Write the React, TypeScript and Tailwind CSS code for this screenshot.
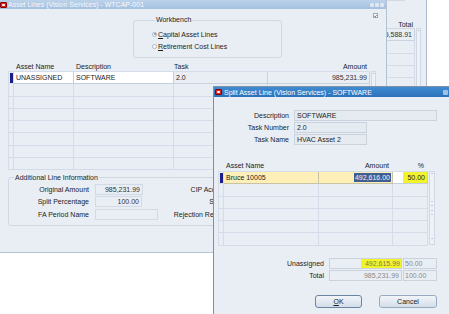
import React from 'react';

function TitleIcon() {
  return (
    <span className="flex h-[6px] w-[7px] items-center justify-center rounded-[1px] border border-[#8a0000] bg-[#d92424]">
      <span className="h-[2px] w-[3px] rounded-[1px] bg-white" />
    </span>
  );
}

function EmptyRow({ cols }: { cols: string[] }) {
  return (
    <div className="flex h-[12.25px]">
      {cols.map((c, i) => (
        <div key={i} className={`h-full border-r border-b border-[#d3dce8] ${c}`} />
      ))}
    </div>
  );
}

function ScrollTrack({ h }: { h: string }) {
  return (
    <div className={`ml-[1px] flex w-[5px] flex-col items-center border border-[#cfd8e4] bg-[#eef2f7] ${h}`}>
      <span className="mt-[1px] text-[5px] leading-[5px] text-[#8090a4]">ˆ</span>
    </div>
  );
}

export default function App() {
  const mainCols = ['w-[5px]', 'w-[60px]', 'w-[100px]', 'w-[94px]', 'w-[102px]'];
  const dlgCols = ['w-[5px]', 'w-[95px]', 'w-[74px]', 'w-[35px]'];

  return (
    <div className="relative h-[314px] w-[449px] overflow-hidden bg-white font-['Liberation_Sans',Arial,sans-serif] text-[7px] leading-none text-[#1c1c1c]">
      {/* window behind, only its Total column shows */}
      <div className="absolute left-[380px] top-0 flex h-[90px] w-[47px] flex-col border-r border-[#aebbcb] bg-[#e9eef5]">
        <div className="ml-[7px] h-[6px] w-[18px] border-b border-[#d0d9e4]" />
        <div className="mt-[20px] flex h-[8px]">
          <div className="w-[35px] pr-[2px] text-right">Total</div>
        </div>
        <div className="flex">
          <div className="flex w-[35px] flex-col border-t border-[#cfd8e4]">
            <div className="flex h-[12.25px] items-center justify-end border-b border-r border-[#c9d3df] pr-[2px] text-[#333]">5,588.91</div>
            <div className="h-[12.25px] border-b border-r border-[#d3dce8]" />
            <div className="h-[12.25px] border-b border-r border-[#d3dce8]" />
            <div className="h-[12.25px] border-b border-r border-[#d3dce8]" />
            <div className="h-[12.25px] border-b border-r border-[#d3dce8]" />
          </div>
          <ScrollTrack h="h-[62px]" />
        </div>
      </div>

      {/* Asset Lines window */}
      <div className="absolute left-0 top-0 flex h-[253px] w-[387px] flex-col border-r border-b border-[#b3c1d1] bg-[#e9eef5]">
        <div className="flex h-[9px] items-center bg-gradient-to-b from-[#bcd2ea] to-[#a4c0e0] text-[#f6f9fc]">
          <TitleIcon />
          <span className="ml-[1px]">Asset Lines (Vision Services) - WTCAP-001</span>
          <div className="ml-auto mr-[2px] flex gap-[1px]">
            <span className="h-[4px] w-[4px] rounded-[1px] bg-[#dce7f3]" />
            <span className="h-[4px] w-[4px] rounded-[1px] bg-[#dce7f3]" />
            <span className="h-[4px] w-[4px] rounded-[1px] bg-[#dce7f3]" />
          </div>
        </div>

        <div className="flex h-[54px] items-start">
          <fieldset className="ml-[133px] mt-[7px] h-[42px] w-[149px] rounded-[3px] border border-[#cfd8e3] pl-[18px]">
            <legend className="ml-[3px] px-[1px] leading-[8px]">Workbench</legend>
            <div className="mt-[4px] flex h-[12px] items-center gap-[1px]">
              <span className="flex h-[5px] w-[5px] items-center justify-center rounded-full border border-[#a8b4c2] bg-white">
                <span className="h-[2px] w-[2px] rounded-full bg-[#7d8896]" />
              </span>
              <span><span className="underline">C</span>apital Asset Lines</span>
            </div>
            <div className="flex h-[12px] items-center gap-[1px]">
              <span className="h-[5px] w-[5px] rounded-full border border-[#a8b4c2] bg-white" />
              <span><span className="underline">R</span>etirement Cost Lines</span>
            </div>
          </fieldset>
          <div className="ml-auto mr-[8px] mt-[4px] flex h-[5px] w-[5px] items-center justify-center border border-[#9aa7b6] bg-white">
            <svg width="4" height="4" viewBox="0 0 4 4">
              <path d="M0.5 2 L1.6 3.2 L3.6 0.6" stroke="#333" strokeWidth="0.8" fill="none" />
            </svg>
          </div>
        </div>

        <div className="ml-[8px] flex h-[8px] items-start">
          <div className="w-[5px]" />
          <div className="w-[60px] pl-[3px]">Asset Name</div>
          <div className="w-[100px] pl-[3px]">Description</div>
          <div className="w-[94px] pl-[1px]">Task</div>
          <div className="w-[102px] pr-[2px] text-right">Amount</div>
        </div>

        <div className="ml-[8px] flex">
          <div className="flex flex-col border-l border-t border-[#d3dce8]">
            <div className="flex h-[12.25px]">
              <div className="flex h-full w-[5px] items-center border-r border-b border-[#d3dce8] pl-[1px]">
                <span className="h-[10px] w-[3px] bg-[#1b1f8a]" />
              </div>
              <div className="flex h-full w-[60px] items-center border-r border-b border-[#c3cedb] bg-white pl-[2px]">UNASSIGNED</div>
              <div className="flex h-full w-[100px] items-center border-r border-b border-[#c3cedb] bg-white pl-[2px]">SOFTWARE</div>
              <div className="flex h-full w-[94px] items-center border-r border-b border-[#c9d3df] pl-[2px]">2.0</div>
              <div className="flex h-full w-[102px] items-center justify-end border-r border-b border-[#c9d3df] pr-[2px] text-[#333]">985,231.99</div>
            </div>
            {[0, 1, 2, 3, 4, 5, 6].map((i) => (
              <EmptyRow key={i} cols={mainCols} />
            ))}
          </div>
          <ScrollTrack h="h-[98px]" />
        </div>

        <fieldset className="ml-[8px] mt-[4px] h-[52px] w-[375px] rounded-[3px] border border-[#cfd8e3]">
          <legend className="ml-[5px] px-[1px] leading-[7px]">Additional Line Information</legend>
          <div className="mt-[2px] flex flex-col">
            <div className="flex h-[12.5px] items-center">
              <div className="w-[80px] text-right">Original Amount</div>
              <div className="ml-[6px] w-[63px]">
                <div className="flex h-[11px] w-[48px] items-center justify-end border border-[#d2dae5] pr-[2px] text-[#333]">985,231.99</div>
              </div>
              <div className="w-[71px] text-right">CIP Account</div>
              <div className="ml-[5px] h-[11px] w-[60px] border border-[#d2dae5]" />
            </div>
            <div className="flex h-[12.5px] items-center">
              <div className="w-[80px] text-right">Split Percentage</div>
              <div className="ml-[6px] w-[63px]">
                <div className="flex h-[11px] w-[47px] items-center justify-end border border-[#d2dae5] pr-[2px] text-[#333]">100.00</div>
              </div>
              <div className="w-[71px] text-right">Status</div>
              <div className="ml-[5px] h-[11px] w-[60px] border border-[#d2dae5]" />
            </div>
            <div className="flex h-[12.5px] items-center">
              <div className="w-[80px] text-right">FA Period Name</div>
              <div className="ml-[6px] w-[63px]">
                <div className="h-[11px] w-[63px] border border-[#d2dae5]" />
              </div>
              <div className="w-[71px] text-right">Rejection Reason</div>
              <div className="ml-[5px] h-[11px] w-[60px] border border-[#d2dae5]" />
            </div>
          </div>
        </fieldset>
      </div>

      {/* Split Asset Line dialog */}
      <div className="absolute left-[213px] top-[86px] flex h-[232px] w-[240px] flex-col border-l border-t border-[#7d90a7] bg-[#e9eef5]">
        <div className="flex h-[10px] items-center bg-gradient-to-b from-[#3f8cd3] to-[#2b71b9] pl-[1px] text-white">
          <TitleIcon />
          <span className="ml-[2px]">Split Asset Line (Vision Services) - SOFTWARE</span>
          <span className="ml-auto mr-[5px] h-[5px] w-[5px] rounded-[1px] bg-[#9fc3e6]" />
        </div>

        <div className="mt-[13px] flex flex-col">
          <div className="flex h-[12px] items-start">
            <div className="w-[75px] pt-[2px] text-right">Description</div>
            <div className="ml-[5px] flex h-[11px] w-[143px] items-center border border-[#c9d2dd] bg-[#e6ebf1] pl-[2px]">SOFTWARE</div>
          </div>
          <div className="flex h-[12px] items-start">
            <div className="w-[75px] pt-[2px] text-right">Task Number</div>
            <div className="ml-[5px] flex h-[11px] w-[73px] items-center border border-[#c9d2dd] bg-[#e6ebf1] pl-[2px]">2.0</div>
          </div>
          <div className="flex h-[12px] items-start">
            <div className="w-[75px] pt-[2px] text-right">Task Name</div>
            <div className="ml-[5px] flex h-[11px] w-[73px] items-center border border-[#c9d2dd] bg-[#e6ebf1] pl-[2px]">HVAC Asset 2</div>
          </div>
        </div>

        <div className="ml-[4px] mt-[16px] flex h-[8px] items-start">
          <div className="w-[5px]" />
          <div className="w-[95px] pl-[3px]">Asset Name</div>
          <div className="w-[74px] pr-[3px] text-right">Amount</div>
          <div className="w-[35px] pr-[3px] text-right">%</div>
        </div>

        <div className="ml-[4px] mt-[1px] flex">
          <div className="flex flex-col border-l border-t border-[#d3dce8]">
            <div className="flex h-[12.33px]">
              <div className="flex h-full w-[5px] items-center border-r border-b border-[#d3dce8] pl-[1px]">
                <span className="h-[10px] w-[3px] bg-[#1b1f8a]" />
              </div>
              <div className="flex h-full w-[95px] items-center border-r border-b border-[#c9c3a6] bg-[#fdefb6] pl-[2px]">Bruce 10005</div>
              <div className="flex h-full w-[74px] items-center justify-end border-r border-b border-[#c9c3a6] bg-[#fdefb6] pr-[1px]">
                <span className="bg-[#3f5f94] px-[1px] py-[1px] text-[#f2f4f8]">492,616.00</span>
              </div>
              <div className="flex h-full w-[35px] justify-end border-r border-b border-[#c3cedb] bg-white">
                <span className="flex h-full w-[24px] items-center justify-end bg-[#f3f32b] pr-[2px]">50.00</span>
              </div>
            </div>
            {[0, 1, 2, 3, 4].map((i) => (
              <EmptyRow key={i} cols={dlgCols} />
            ))}
          </div>
          <div className="ml-[1px] flex h-[74px] w-[6px] flex-col items-center justify-between border border-[#cfd8e4] bg-[#eef2f7]">
            <span className="mt-[1px] text-[5px] leading-[5px] text-[#8090a4]">ˆ</span>
            <span className="flex h-[14px] w-[2px] flex-col justify-between">
              <span className="h-px w-[2px] bg-[#c3ccd7]" />
              <span className="h-px w-[2px] bg-[#c3ccd7]" />
              <span className="h-px w-[2px] bg-[#c3ccd7]" />
              <span className="h-px w-[2px] bg-[#c3ccd7]" />
            </span>
            <span className="mb-[1px] text-[5px] leading-[5px] text-[#8090a4]">ˇ</span>
          </div>
        </div>

        <div className="mt-[12px] flex flex-col">
          <div className="flex h-[12px] items-start">
            <div className="w-[110px] pt-[2px] text-right">Unassigned</div>
            <div className="ml-[5px] flex h-[11px] w-[73px] justify-end border border-[#c9d2dd] bg-[#e9eef5]">
              <span className="flex h-full w-[40px] items-center justify-end bg-[#f3f32b] pr-[1px] text-[#7c7c52]">492,615.99</span>
            </div>
            <div className="ml-[1px] flex h-[11px] w-[34px] items-center border border-[#c9d2dd] pl-[1px] text-[#8a8a8a]">50.00</div>
          </div>
          <div className="flex h-[12px] items-start">
            <div className="w-[110px] pt-[2px] text-right">Total</div>
            <div className="ml-[5px] flex h-[11px] w-[73px] items-center justify-end border border-[#c9d2dd] pr-[2px] text-[#8a8a8a]">985,231.99</div>
            <div className="ml-[1px] flex h-[11px] w-[34px] items-center border border-[#c9d2dd] pl-[1px] text-[#8a8a8a]">100.00</div>
          </div>
        </div>

        <div className="ml-[101px] mt-[13px] flex">
          <div className="flex h-[13px] w-[47px] items-center justify-center rounded-[3px] border border-[#6c84a3] bg-gradient-to-b from-[#f1f5f9] to-[#d3deea]">
            <span><span className="underline">O</span>K</span>
          </div>
          <div className="ml-[17px] flex h-[13px] w-[58px] items-center justify-center rounded-[3px] border border-[#99abc1] bg-gradient-to-b from-[#f1f5f9] to-[#d3deea]">
            Cancel
          </div>
        </div>
      </div>
    </div>
  );
}
